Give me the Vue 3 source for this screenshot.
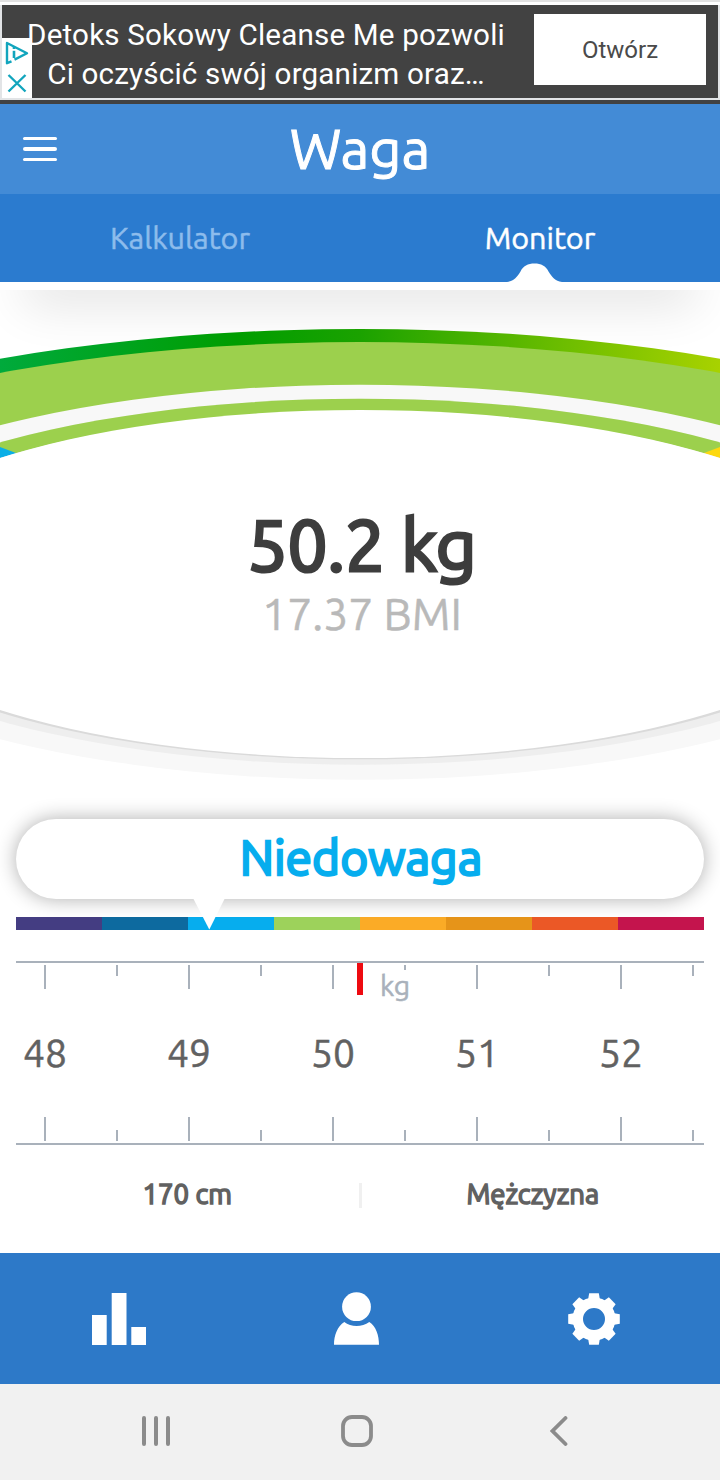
<template>
  <div class="app">
    <!-- Ad banner -->
    <div class="ad">
      <div class="ad-body">
        <div class="ad-text">
          <div class="ad-line-one">Detoks Sokowy Cleanse Me pozwoli</div>
          <div class="ad-line-two">Ci oczyścić swój organizm oraz…</div>
        </div>
        <button type="button" class="ad-button">Otwórz</button>
        <div class="ad-badge">
          <svg width="30" height="60" viewBox="0 0 30 60" fill="none" stroke="#12a5bd" stroke-width="2.4">
            <path d="M9.5 23.3 L5 25.2 V5 L25 15.2 L12.5 21.6" stroke-linejoin="round" />
            <path d="M12 12.8 V20" stroke-width="2.6" />
            <path d="M12 8.8 V11" stroke-width="2.6" />
            <path d="M6.5 37 L23.5 53.5 M23.5 37 L6.5 53.5" />
          </svg>
        </div>
      </div>
    </div>

    <header class="header">
      <button type="button" class="menu-button" aria-label="Menu">
        <span></span>
        <span></span>
        <span></span>
      </button>
      <h1 class="title">Waga</h1>
    </header>

    <nav class="tabs">
      <button
        v-for="tab in tabs"
        :key="tab"
        type="button"
        class="tab"
        :class="{ 'is-active': tab === activeTab }"
        @click="activeTab = tab"
      >
        {{ tab }}
      </button>
      <svg class="tab-bump" width="60" height="20" viewBox="0 0 60 20">
        <path d="M2 20 C9 19 12 15 15.5 9.5 C18 4 23 1.5 29.5 1.5 C36 1.5 41 4 43.5 9.5 C47 15 50 19 57 20 Z" fill="#fff" />
      </svg>
    </nav>

    <!-- Gauge -->
    <section class="gauge">
      <svg class="gauge-dial" width="720" height="510" viewBox="0 290 720 510">
        <defs>
          <linearGradient id="rim" gradientUnits="userSpaceOnUse" x1="0" y1="0" x2="720" y2="0">
            <stop offset="0" stop-color="#00aa3c" />
            <stop offset=".33" stop-color="#009d00" />
            <stop offset=".5" stop-color="#1ba200" />
            <stop offset=".76" stop-color="#66bb00" />
            <stop offset="1" stop-color="#a8d200" />
          </linearGradient>
          <clipPath id="upper"><rect x="0" y="290" width="720" height="292" /></clipPath>
          <clipPath id="ring"><ellipse cx="360" cy="581.7" rx="555" ry="183" /></clipPath>
        </defs>
        <g clip-path="url(#upper)">
          <ellipse cx="360" cy="582" rx="766" ry="253" fill="url(#rim)" />
          <ellipse cx="360" cy="582" rx="733" ry="240" fill="#9cd04d" />
        </g>
        <ellipse cx="360" cy="582.2" rx="593" ry="197.5" fill="#f8f8f8" />
        <ellipse cx="360" cy="581.7" rx="555" ry="183" fill="#eee" />
        <g clip-path="url(#ring)">
          <rect x="0" y="390" width="720" height="190" fill="#9cd04d" />
          <path d="M0 447 L32 459 L0 480 Z" fill="#0aaee6" />
          <path d="M720 447 L688 459 L720 480 Z" fill="#fdd80f" />
        </g>
        <ellipse cx="360" cy="585.3" rx="528" ry="174" fill="#dadada" />
        <ellipse cx="360" cy="584" rx="522" ry="174" fill="#fff" />
      </svg>
      <div class="gauge-text">
        <div class="weight">{{ weight }} kg</div>
        <div class="bmi">{{ bmi }} BMI</div>
      </div>
    </section>

    <!-- BMI category -->
    <section class="category">
      <div class="category-pill">
        <span>Niedowaga</span>
        <svg class="category-pointer" width="32" height="32" viewBox="0 0 32 32">
          <path d="M0 0 H32 L16.3 31.5 Z" fill="#fff" />
        </svg>
      </div>
      <div class="category-bar">
        <i v-for="color in colors" :key="color" :style="{ backgroundColor: color }"></i>
      </div>
    </section>

    <!-- Weight ruler -->
    <section class="ruler">
      <div class="ticks">
        <i v-for="n in 10" :key="n" :class="{ short: n % 2 === 0 }"></i>
      </div>
      <div class="ruler-marker"></div>
      <span class="ruler-unit">kg</span>
      <div class="ruler-labels">
        <span v-for="value in rulerValues" :key="value">{{ value }}</span>
      </div>
      <div class="ticks ticks-bottom">
        <i v-for="n in 10" :key="n" :class="{ short: n % 2 === 0 }"></i>
      </div>
    </section>

    <section class="profile">
      <div class="profile-item">170 cm</div>
      <div class="profile-divider"></div>
      <div class="profile-item">Mężczyzna</div>
    </section>

    <nav class="bottom-nav">
      <button type="button" aria-label="Statystyki">
        <svg width="54" height="52" viewBox="0 0 54 52" fill="#fff">
          <path d="M0 22 H14.7 V52 H0 Z M19.7 0 H34.5 V52 H19.7 Z M39.3 34 H54 V52 H39.3 Z" />
        </svg>
      </button>
      <button type="button" aria-label="Profil">
        <svg width="45" height="53" viewBox="0 0 45 53" fill="#fff">
          <circle cx="22.5" cy="14.7" r="14.4" />
          <path d="M10.3 30 C17 35.4 28 35.4 35.3 30 C42 34.5 45 43 45 52.8 H0 C0 43 3.5 34.5 10.3 30 Z" />
        </svg>
      </button>
      <button type="button" aria-label="Ustawienia">
        <svg width="52" height="52" viewBox="-26 -26 52 52">
          <circle r="16.2" fill="none" stroke="#fff" stroke-width="10.4" />
          <path
            v-for="n in 8"
            :key="n"
            d="M-6 -19 L-4.8 -25.8 H4.8 L6 -19 Z"
            fill="#fff"
            :transform="`rotate(${n * 45})`"
          />
        </svg>
      </button>
    </nav>

    <!-- Android system bar -->
    <div class="system-bar">
      <svg width="28" height="30" viewBox="0 0 28 30" stroke="#8b8b8b" stroke-width="4" stroke-linecap="round">
        <path d="M2 2 V28 M14 2 V28 M26 2 V28" />
      </svg>
      <svg class="home-icon" width="32" height="32" viewBox="0 0 32 32" fill="none" stroke="#8b8b8b" stroke-width="3.8">
        <rect x="2" y="2" width="28" height="28" rx="9" />
      </svg>
      <svg width="18" height="30" viewBox="0 0 18 30" fill="none" stroke="#8b8b8b" stroke-width="3.8" stroke-linecap="round">
        <path d="M15.5 2 L2.5 15 L15.5 28" />
      </svg>
    </div>
  </div>
</template>

<script setup>
import { ref } from 'vue'

const tabs = ['Kalkulator', 'Monitor']
const activeTab = ref('Monitor')

const weight = '50.2'
const bmi = '17.37'

const colors = ['#443d82', '#0d6a9f', '#06adee', '#9dd25b', '#fbab26', '#e69419', '#eb5826', '#c4144d']
const rulerValues = [48, 49, 50, 51, 52]
</script>

<style>
body {
  margin: 0;
}
</style>

<style scoped>
.app {
  display: flex;
  flex-direction: column;
  width: 720px;
  height: 1480px;
  overflow: hidden;
  background-color: #fff;
  font-family: Ubuntu, "Noto Sans", sans-serif;
  -webkit-text-stroke: 0.5px;
}

button {
  padding: 0;
  border: 0;
  background: none;
  font-family: inherit;
}

svg {
  display: block;
}

/* Ad banner */
.ad {
  box-sizing: border-box;
  height: 104px;
  padding-top: 3px;
  border-top: 2px solid #e2e2e2;
  border-bottom: 4px solid #424242;
  background-color: #fff;
  font-family: Roboto, sans-serif;
  -webkit-text-stroke: 0;
}

.ad-body {
  position: relative;
  box-sizing: border-box;
  display: flex;
  align-items: flex-start;
  justify-content: space-between;
  height: 95px;
  padding: 9px 12px 0 0;
  border: solid #e2e4e6;
  border-width: 0 2px 2px;
  background-color: #424242;
}

.ad-text {
  width: 528px;
  padding-top: 2px;
  color: #fff;
  font-size: 29.6px;
  line-height: 39px;
  text-align: center;
  white-space: nowrap;
}

.ad-line-one {
  letter-spacing: 0.18px;
}

.ad-line-two {
  letter-spacing: 0.17px;
}

.ad-button {
  width: 172px;
  height: 71px;
  background-color: #fff;
  color: #4a4a4a;
  font-size: 24px;
}

.ad-badge {
  position: absolute;
  left: 0;
  bottom: 0;
  background-color: #fff;
}

/* Header */
.header {
  display: grid;
  grid-template-columns: 80px 1fr 80px;
  align-items: center;
  height: 90px;
  background-color: #438bd6;
}

.menu-button {
  display: flex;
  flex-direction: column;
  gap: 7px;
  width: 34px;
  margin-left: 23px;
}

.menu-button span {
  height: 3.4px;
  border-radius: 2px;
  background-color: #fff;
}

.title {
  margin: 0;
  color: #fff;
  font-size: 56px;
  font-weight: 400;
  line-height: 80px;
  text-align: center;
  -webkit-text-stroke: 1px;
}

/* Tabs */
.tabs {
  position: relative;
  display: flex;
  height: 88px;
  border-bottom: 8px solid #fff;
  background-color: #2b7bcf;
}

.tab {
  flex: 1;
  color: #8dbcec;
  font-size: 30.5px;
  cursor: pointer;
}

.tab.is-active {
  color: #fff;
}

.tab-bump {
  position: absolute;
  left: 505px;
  bottom: 0;
}

/* Gauge */
.gauge {
  position: relative;
  height: 510px;
  overflow: hidden;
}

.gauge::before {
  content: "";
  position: absolute;
  top: -40px;
  left: 24px;
  width: 672px;
  height: 40px;
  box-shadow: 0 14px 50px rgba(0, 0, 0, 0.12);
}

.gauge-dial {
  position: relative;
}

.gauge-text {
  position: absolute;
  top: 205px;
  left: 2px;
  width: 720px;
  text-align: center;
  white-space: nowrap;
}

.weight {
  color: #3d3d3d;
  font-size: 71px;
  line-height: 100px;
  -webkit-text-stroke: 3.2px;
}

.bmi {
  margin-top: -6px;
  color: #b9b9b9;
  font-size: 44.5px;
  line-height: 50px;
}

/* BMI category */
.category {
  padding: 19px 16px 0;
}

.category-pill {
  position: relative;
  display: flex;
  justify-content: center;
  height: 80px;
  border-radius: 40px;
  background-color: #fff;
  box-shadow: 0 0 20px rgba(0, 0, 0, 0.32);
}

.category-pill span {
  margin-left: 2px;
  color: #06adee;
  font-size: 48px;
  line-height: 76px;
  -webkit-text-stroke: 2.4px;
}

.category-pointer {
  position: absolute;
  top: 79px;
  left: 177px;
}

.category-bar {
  display: flex;
  height: 13px;
  margin-top: 18px;
}

.category-bar i {
  flex: 1;
}

/* Weight ruler */
.ruler {
  position: relative;
  box-sizing: border-box;
  height: 184px;
  margin: 31px 16px 0;
  border: solid #a9b1bb;
  border-width: 2px 0;
}

.ticks {
  display: flex;
  height: 24px;
  padding: 2px 0 0 28px;
  overflow: hidden;
}

.ticks i {
  flex: none;
  width: 2px;
  height: 24px;
  margin-right: 70px;
  background-color: #a9b1bb;
}

.ticks .short {
  height: 11px;
}

.ticks-bottom {
  align-items: flex-end;
  padding: 38px 0 0 28px;
}

.ruler-marker {
  position: absolute;
  top: 0;
  left: 341px;
  width: 6px;
  height: 32px;
  background-color: #ee0a10;
}

.ruler-unit {
  position: absolute;
  top: 7px;
  left: 363px;
  padding: 0 1px;
  background-color: #fff;
  color: #a9b1bb;
  font-size: 28.5px;
  line-height: 31px;
}

.ruler-labels {
  display: flex;
  width: 720px;
  margin: 38px 0 0 -43px;
}

.ruler-labels span {
  flex: 1;
  color: #616161;
  font-size: 39px;
  line-height: 52px;
  text-align: center;
}

/* Profile summary */
.profile {
  display: flex;
  align-items: center;
  height: 108px;
  padding: 0 16px;
}

.profile-item {
  flex: 1;
  padding-bottom: 12px;
  color: #616161;
  font-size: 27.5px;
  text-align: center;
  -webkit-text-stroke: 1.5px;
}

.profile-divider {
  width: 3px;
  height: 25px;
  margin-bottom: 8px;
  background-color: #f0f0f0;
}

/* Bottom navigation */
.bottom-nav {
  display: flex;
  height: 131px;
  background-color: #2d79c8;
}

.bottom-nav button {
  flex: 0 0 237.5px;
  display: flex;
  align-items: center;
  justify-content: center;
  cursor: pointer;
}

/* System bar */
.system-bar {
  box-sizing: border-box;
  display: flex;
  align-items: center;
  justify-content: space-between;
  height: 96px;
  padding: 0 152px 2px 142px;
  background-color: #f1f1f1;
}

.home-icon {
  margin-right: 6px;
}
</style>
